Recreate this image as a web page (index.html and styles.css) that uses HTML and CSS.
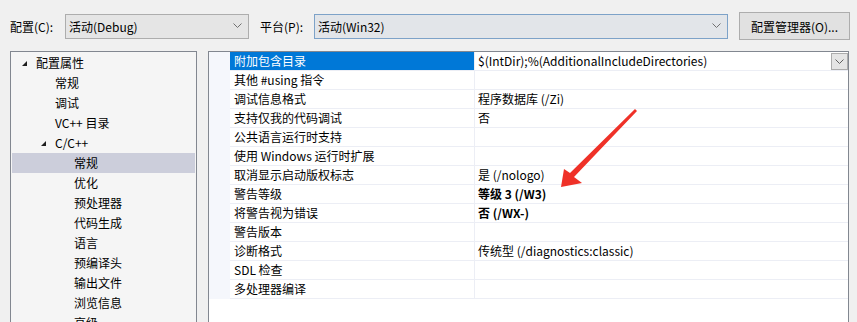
FILE: index.html
```html
<!DOCTYPE html>
<html lang="zh-CN">
<head>
    <meta charset="UTF-8">
    <title>C/C++ 常规</title>
    <link rel="stylesheet" href="styles.css">
</head>
<body>
    <div class="toolbar">
        <label class="label">配置(C):</label>
        <div class="combo combo-config">
            <span>活动(Debug)</span>
            <svg class="chev" width="9" height="6" viewBox="0 0 9 6"><polyline points="0.5,0.5 4.5,4.5 8.5,0.5" fill="none" stroke="#707070" stroke-width="1"/></svg>
        </div>
        <label class="label label-platform">平台(P):</label>
        <div class="combo combo-platform">
            <span>活动(Win32)</span>
            <svg class="chev" width="9" height="6" viewBox="0 0 9 6"><polyline points="0.5,0.5 4.5,4.5 8.5,0.5" fill="none" stroke="#707070" stroke-width="1"/></svg>
        </div>
        <button class="btn">配置管理器(O)...</button>
    </div>

    <div class="panes">
        <ul class="tree">
            <li class="lvl0"><i class="tri"></i>配置属性</li>
            <li class="lvl1">常规</li>
            <li class="lvl1">调试</li>
            <li class="lvl1">VC++ 目录</li>
            <li class="lvl1 open"><i class="tri"></i>C/C++</li>
            <li class="lvl2 selected">常规</li>
            <li class="lvl2">优化</li>
            <li class="lvl2">预处理器</li>
            <li class="lvl2">代码生成</li>
            <li class="lvl2">语言</li>
            <li class="lvl2">预编译头</li>
            <li class="lvl2">输出文件</li>
            <li class="lvl2">浏览信息</li>
            <li class="lvl2">高级</li>
        </ul>

        <div class="props">
            <div class="row active">
                <div class="gutter"></div>
                <div class="name">附加包含目录</div>
                <div class="value">
                    <span>$(IntDir);%(AdditionalIncludeDirectories)</span>
                    <span class="drop"><svg width="9" height="6" viewBox="0 0 9 6"><polyline points="0.5,0.5 4.5,4.5 8.5,0.5" fill="none" stroke="#606060" stroke-width="1"/></svg></span>
                </div>
            </div>
            <div class="row"><div class="gutter"></div><div class="name">其他 #using 指令</div><div class="value"></div></div>
            <div class="row"><div class="gutter"></div><div class="name">调试信息格式</div><div class="value">程序数据库 (/Zi)</div></div>
            <div class="row"><div class="gutter"></div><div class="name">支持仅我的代码调试</div><div class="value">否</div></div>
            <div class="row"><div class="gutter"></div><div class="name">公共语言运行时支持</div><div class="value"></div></div>
            <div class="row"><div class="gutter"></div><div class="name">使用 Windows 运行时扩展</div><div class="value"></div></div>
            <div class="row"><div class="gutter"></div><div class="name">取消显示启动版权标志</div><div class="value">是 (/nologo)</div></div>
            <div class="row"><div class="gutter"></div><div class="name">警告等级</div><div class="value bold">等级 3 (/W3)</div></div>
            <div class="row"><div class="gutter"></div><div class="name">将警告视为错误</div><div class="value bold">否 (/WX-)</div></div>
            <div class="row"><div class="gutter"></div><div class="name">警告版本</div><div class="value"></div></div>
            <div class="row"><div class="gutter"></div><div class="name">诊断格式</div><div class="value">传统型 (/diagnostics:classic)</div></div>
            <div class="row"><div class="gutter"></div><div class="name">SDL 检查</div><div class="value"></div></div>
            <div class="row"><div class="gutter"></div><div class="name">多处理器编译</div><div class="value"></div></div>
        </div>
    </div>

    <!-- red annotation arrow drawn over the screenshot -->
    <svg class="arrow" width="857" height="322" viewBox="0 0 857 322">
        <polygon points="637,111 574,177 582,183 561,187 564,169 570,173 635,109" fill="#ef3128"/>
    </svg>
</body>
</html>
```

FILE: styles.css
```css
* {
    margin: 0;
    padding: 0;
    box-sizing: border-box;
}

body {
    width: 857px;
    height: 322px;
    overflow: hidden;
    background: #f0f0f0;
    font-family: "Noto Sans CJK SC", "Noto Sans", sans-serif;
    font-size: 12px;
    color: #000;
    position: relative;
}

.toolbar {
    display: flex;
    align-items: center;
    height: 51px;
    padding: 1px 0 0 10px;
}

.label {
    width: 55px;
}
.label-platform {
    width: 54px;
    margin-left: 11px;
}

.combo {
    height: 25px;
    display: flex;
    align-items: center;
    justify-content: space-between;
    padding: 0 6px 0 3px;
    border: 1px solid #adadad;
    background: #e5e5e5;
}
.combo-config {
    width: 184px;
}
.combo-platform {
    width: 414px;
    border-color: #7da2c8;
    background: #e2e5e9;
}

.btn {
    width: 111px;
    height: 28px;
    margin-left: 11px;
    border: 1px solid #adadad;
    background: #e1e1e1;
    font: inherit;
    color: #000;
}

.panes {
    display: flex;
    padding-left: 10px;
    gap: 11px;
}

.tree {
    list-style: none;
    width: 187px;
    height: 290px;
    border: 1px solid #828790;
    background: #f5f5f5;
    padding-top: 1px;
}
.tree li {
    height: 20px;
    line-height: 20px;
    position: relative;
    margin: 0 1px;
}
.tree .lvl0 { padding-left: 24px; }
.tree .lvl1 { padding-left: 43px; }
.tree .lvl2 { padding-left: 62px; }
.tree .selected {
    background: #cccedb;
}
.tri {
    position: absolute;
    top: 8px;
    width: 0;
    height: 0;
    border-left: 5px solid transparent;
    border-bottom: 5px solid #1e1e1e;
}
.lvl0 .tri { left: 10px; }
.lvl1 .tri { left: 29px; }

.props {
    width: 641px;
    height: 290px;
    border: 1px solid #828790;
    background: #fff;
}
.row {
    display: grid;
    grid-template-columns: 21px 245px 1fr;
    height: 19px;
    line-height: 18px;
}
.gutter {
    background: #f5f7fc;
}
.name,
.value {
    border-bottom: 1px solid #eceef5;
    white-space: nowrap;
}
.name {
    padding-left: 4px;
    border-right: 1px solid #eceef5;
}
.value {
    padding-left: 3px;
    display: flex;
}
.bold {
    font-weight: bold;
}
.active .name {
    background: #0078d7;
    color: #fff;
}
.drop {
    margin: 1px 0 0 auto;
    width: 17px;
    height: 17px;
    border: 1px solid #acacac;
    background: #e5e5e5;
    display: flex;
    align-items: center;
    justify-content: center;
}

.arrow {
    position: absolute;
    left: 0;
    top: 0;
    pointer-events: none;
}
```
